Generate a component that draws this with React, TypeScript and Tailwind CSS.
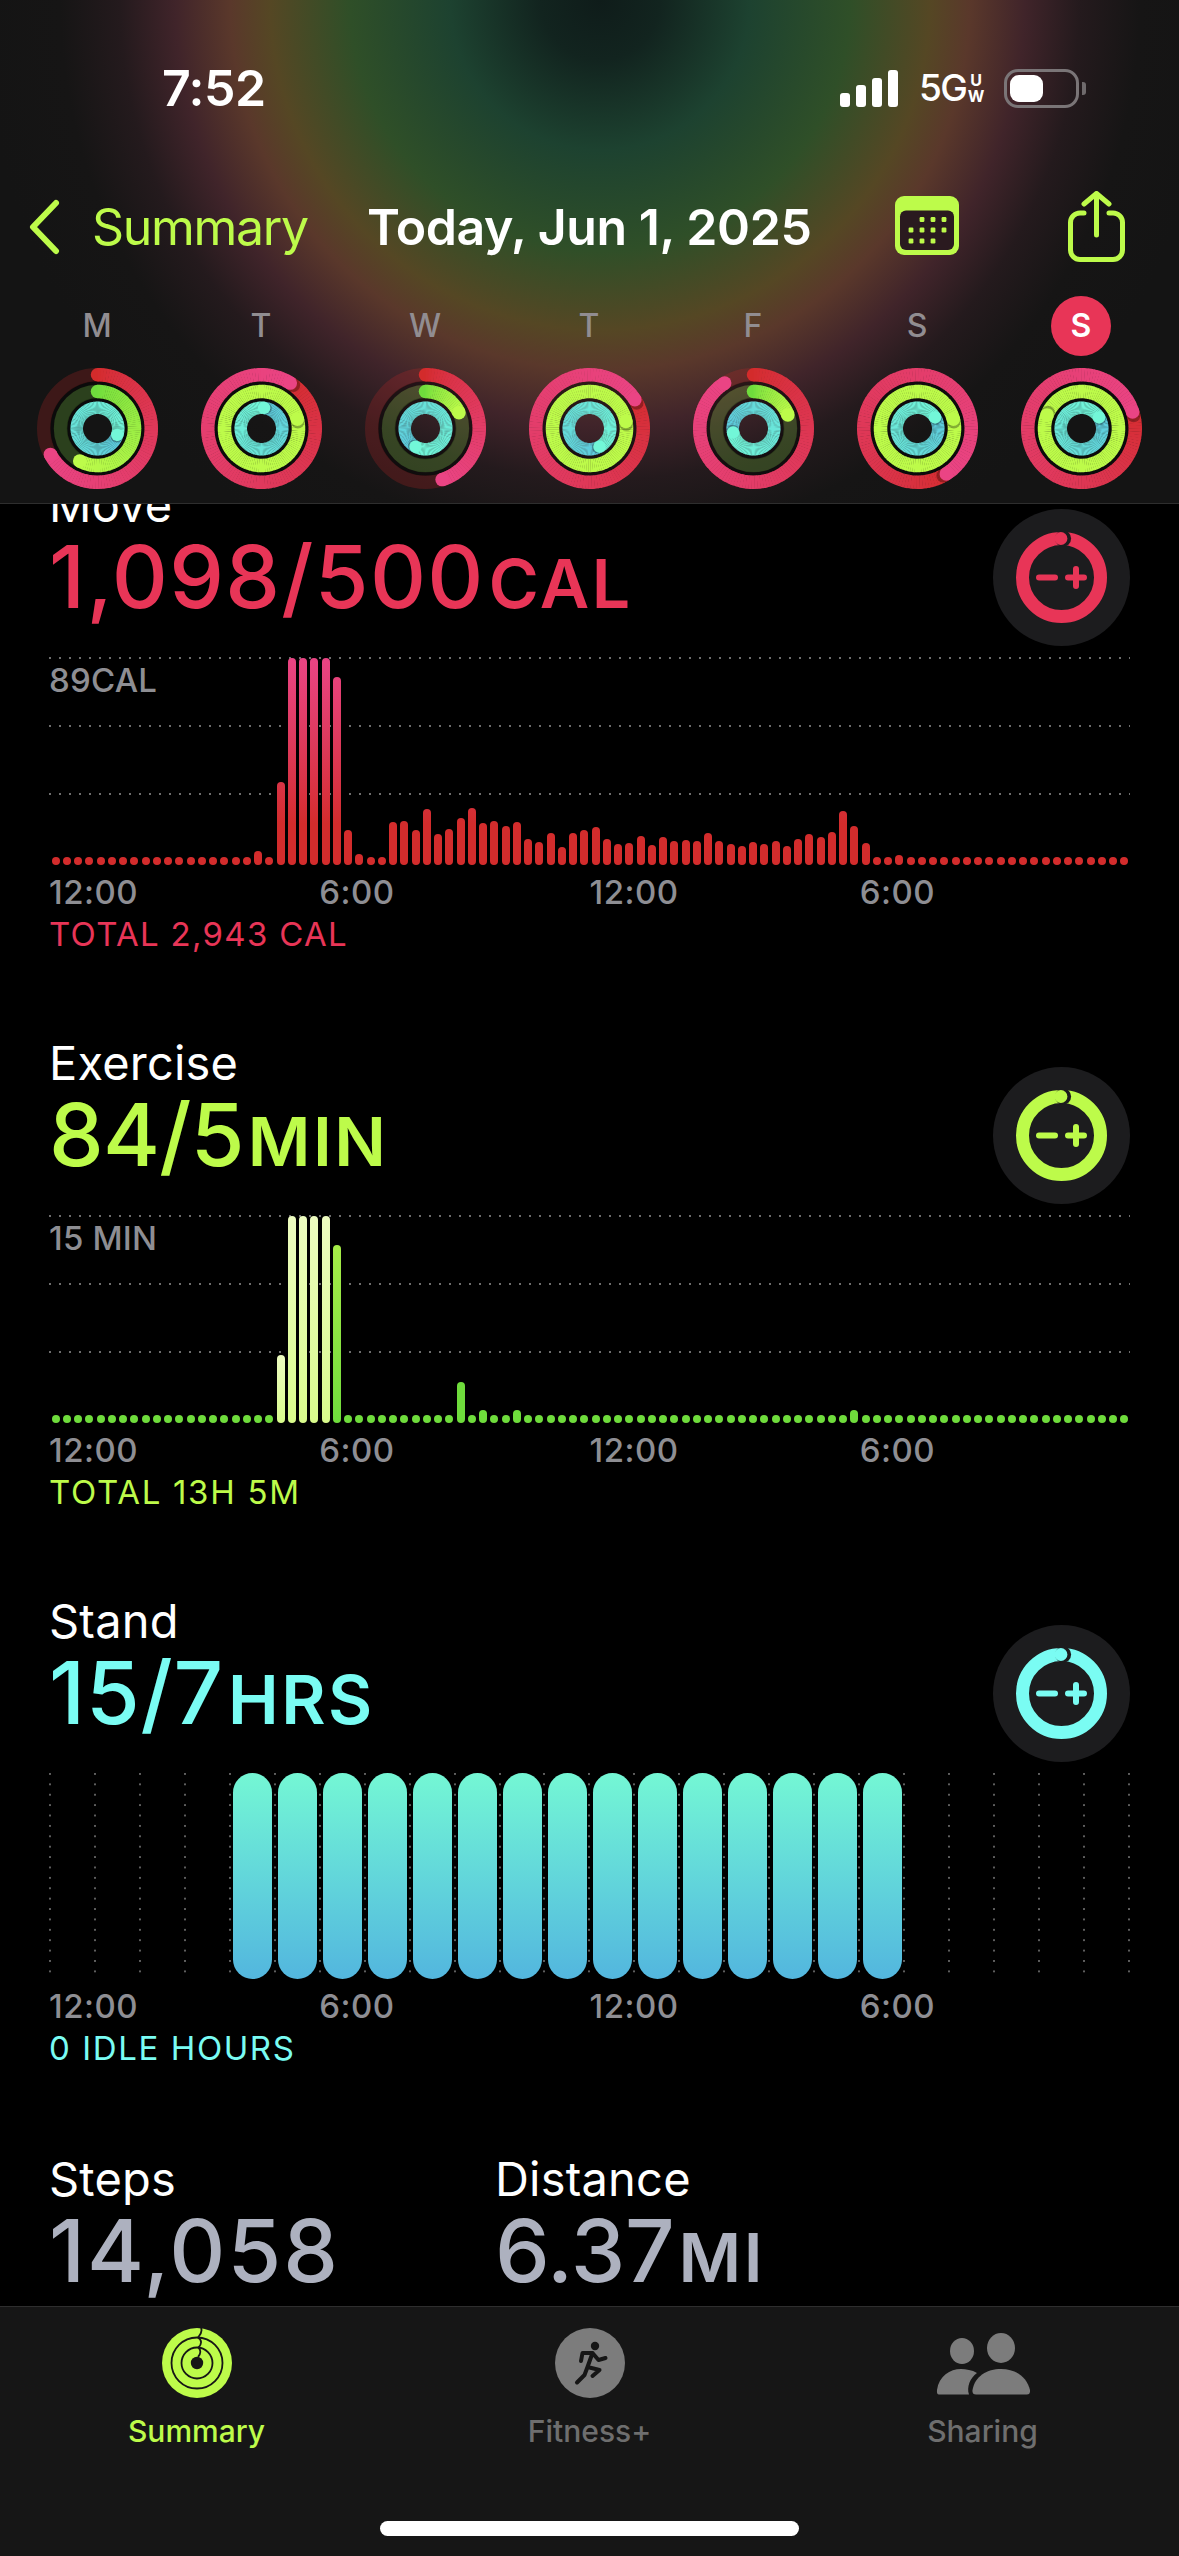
const FONT = "font-['Inter','Noto_Sans',sans-serif]";

type Rgb = [number, number, number];
type Tone = { from: Rgb; to: Rgb; over: Rgb; track: string };

const MOVE: Tone = { from: [211, 43, 43], to: [234, 68, 132], over: [211, 43, 43], track: "#d32b2b" };
const EXERCISE: Tone = { from: [111, 220, 60], to: [189, 251, 74], over: [189, 251, 74], track: "#7ee03f" };
const STAND: Tone = { from: [84, 182, 222], to: [114, 247, 216], over: [90, 196, 222], track: "#54b6de" };

const days = [
  { label: "M", move: 0.67, exercise: 0.58, stand: 1.3 },
  { label: "T", move: 1.09, exercise: 1.21, stand: 1.02 },
  { label: "W", move: 0.45, exercise: 0.18, stand: 1.58 },
  { label: "T", move: 1.16, exercise: 1.22, stand: 1.42 },
  { label: "F", move: 0.91, exercise: 0.19, stand: 1.72 },
  { label: "S", move: 1.41, exercise: 1.21, stand: 1.16 },
  { label: "S", move: 1.2, exercise: 1.81, stand: 1.16, today: true },
];

function polar(r: number, deg: number, c = 60.5) {
  const a = ((deg - 90) * Math.PI) / 180;
  return [c + r * Math.cos(a), c + r * Math.sin(a)];
}

function RingArc({ r, width, progress, tone }: { r: number; width: number; progress: number; tone: Tone }) {
  const over = progress >= 1;
  const end = progress * 360;
  const start = over ? end - 360 : 0;
  const n = Math.ceil((end - start) / 3);
  const base = over ? tone.over : tone.from;
  const colorAt = (t: number) =>
    `rgb(${base.map((v, i) => Math.round(v + (tone.to[i] - v) * Math.pow(t, 0.65))).join(",")})`;
  const [sx, sy] = polar(r, start);
  const [hx, hy] = polar(r, end);
  const [dx, dy] = polar(r, end + 4);
  return (
    <g>
      {!over && <circle cx={60.5} cy={60.5} r={r} fill="none" stroke={tone.track} strokeOpacity={0.22} strokeWidth={width} />}
      {!over && <circle cx={sx} cy={sy} r={width / 2} fill={colorAt(0)} />}
      {Array.from({ length: n }).map((_, i) => {
        const a0 = start + ((end - start) * i) / n;
        const a1 = start + ((end - start) * (i + 1)) / n + 0.4;
        const [x0, y0] = polar(r, a0);
        const [x1, y1] = polar(r, a1);
        return (
          <path
            key={i}
            d={`M${x0} ${y0}A${r} ${r} 0 0 1 ${x1} ${y1}`}
            fill="none"
            stroke={colorAt((i + 0.5) / n)}
            strokeWidth={width}
          />
        );
      })}
      {over && <circle cx={dx} cy={dy} r={width / 2} fill="#000" fillOpacity={0.3} />}
      <circle cx={hx} cy={hy} r={width / 2} fill={colorAt(1)} />
    </g>
  );
}

function Rings({ move, exercise, stand }: { move: number; exercise: number; stand: number }) {
  return (
    <svg width="121" height="121" viewBox="0 0 121 121">
      <circle cx={60.5} cy={60.5} r={45.5} fill="none" stroke="#000" strokeOpacity={0.45} strokeWidth={4} />
      <circle cx={60.5} cy={60.5} r={29} fill="none" stroke="#000" strokeOpacity={0.45} strokeWidth={4} />
      <RingArc r={53.75} width={13.5} progress={move} tone={MOVE} />
      <RingArc r={37} width={13.5} progress={exercise} tone={EXERCISE} />
      <RingArc r={20.75} width={12.5} progress={stand} tone={STAND} />
    </svg>
  );
}

function StatusBar() {
  return (
    <div className="flex items-center h-[60px] mt-[58px] pl-[162px] pr-[100px]">
      <span className="text-[50px] leading-[60px] font-semibold text-white tracking-[-0.5px]">7:52</span>
      <div className="ml-auto flex items-center">
        <svg width="58" height="37" viewBox="0 0 58 37" fill="#fff">
          <rect x="0" y="23" width="10" height="14" rx="3" />
          <rect x="16" y="15" width="10" height="22" rx="3" />
          <rect x="32" y="8" width="10" height="29" rx="3" />
          <rect x="48" y="0" width="10" height="37" rx="3" />
        </svg>
        <span className="ml-[21px] w-[46px] text-[37px] leading-[44px] font-medium text-white tracking-[-1.5px]">5G</span>
        <div className="ml-[3px] w-[16px] flex flex-col items-center text-white font-bold text-[16px] leading-[16px]">
          <span>U</span>
          <span>W</span>
        </div>
        <div className="relative ml-[20px] flex items-center w-[75px] h-[39px] rounded-[14px] border-[3px] border-[#7a7577] p-[3px]">
          <div className="w-[33px] h-[27px] rounded-[9px] bg-white" />
          <div className="absolute -right-[10px] top-[10px] w-[4px] h-[13px] rounded-r-[3px] bg-[#6f6a6c]" />
        </div>
      </div>
    </div>
  );
}

function NavBar() {
  return (
    <div className="flex items-center h-[70px] mt-[74px]">
      <svg className="ml-[29px]" width="31" height="56" viewBox="0 0 31 56" fill="none" stroke="#bdfb4a" strokeWidth="6" strokeLinecap="round" strokeLinejoin="round">
        <path d="M27 4 L4 28 L27 52" />
      </svg>
      <span className="ml-[32px] text-[50px] leading-[60px] text-[#bdfb4a] tracking-[-1.3px]">Summary</span>
      <span className="ml-[59px] text-[50px] leading-[60px] font-semibold text-white tracking-[-0.4px]">Today, Jun 1, 2025</span>
      <svg className="ml-[84px] mt-[-3px]" width="64" height="59" viewBox="0 0 64 59">
        <rect width="64" height="59" rx="9" fill="#bdfb4a" />
        <rect x="5" y="14.5" width="54" height="39.5" rx="6" fill="#2a1a1f" />
        {[[27, 23.5], [38, 23.5], [49, 23.5], [16, 34], [27, 34], [38, 34], [49, 34], [16, 45], [27, 45], [38, 45]].map(([x, y]) => (
          <rect key={`${x}-${y}`} x={x - 2.4} y={y - 2.4} width="4.8" height="4.8" rx="1.2" fill="#bdfb4a" />
        ))}
      </svg>
      <svg className="ml-[109px] mt-[-1px]" width="57" height="71" viewBox="0 0 57 71" fill="none" stroke="#bdfb4a" strokeWidth="5" strokeLinecap="round" strokeLinejoin="round">
        <path d="M16 22 H12 A9.5 9.5 0 0 0 2.5 31.5 V59 A9.5 9.5 0 0 0 12 68.5 H45 A9.5 9.5 0 0 0 54.5 59 V31.5 A9.5 9.5 0 0 0 45 22 H41" />
        <path d="M28.5 44 V3" />
        <path d="M16 13 L28.5 2.5 L41 13" />
      </svg>
    </div>
  );
}

function WeekRow() {
  return (
    <div className="flex mt-[34px] pl-[15px]">
      {days.map((d, i) => (
        <div key={i} className="w-[164px] flex flex-col items-center">
          <div
            className={`w-[60px] h-[60px] rounded-full flex items-center justify-center text-[32px] font-medium ${
              d.today ? "bg-[#e83557] text-white font-semibold" : "text-[#918d91]"
            }`}
          >
            {d.label}
          </div>
          <div className="mt-[12px] h-[121px]">
            <Rings move={d.move} exercise={d.exercise} stand={d.stand} />
          </div>
        </div>
      ))}
    </div>
  );
}

function ButtonRing({ color }: { color: string }) {
  const r = 39;
  const c = 45.5;
  return (
    <div className="w-[137px] h-[137px] rounded-full bg-[#1c1c1e] flex items-center justify-center shrink-0">
      <svg width="91" height="91" viewBox="0 0 91 91">
        <circle cx={c} cy={c} r={r} fill="none" stroke={color} strokeWidth={13} />
        <circle cx={c + 1.6} cy={c - r} r={8} fill="#1c1c1e" />
        <circle cx={c - 0.6} cy={c - r} r={6.5} fill={color} />
        <path d="M23 45.5 H39" stroke={color} strokeWidth={6} strokeLinecap="round" />
        <path d="M52 45.5 H68 M60 37 V54" stroke={color} strokeWidth={6} strokeLinecap="round" />
      </svg>
    </div>
  );
}

function Value(props: { value: string; unit?: string; color: string; tracking: string }) {
  return (
    <div className={`mt-[4px] flex items-baseline h-[80px] leading-[80px] ${props.color}`}>
      <span className={`text-[87px] font-medium ${props.tracking}`}>{props.value}</span>
      {props.unit && <span className="ml-[4px] text-[68px] font-semibold tracking-[2.5px]">{props.unit}</span>}
    </div>
  );
}

function SectionHeader(props: { title: string; value: string; unit: string; color: string; ring: string; tracking: string }) {
  return (
    <div className="flex justify-between h-[169px]">
      <div>
        <div className="text-[47px] leading-[56px] text-white tracking-[0.2px]">{props.title}</div>
        <Value value={props.value} unit={props.unit} color={props.color} tracking={props.tracking} />
      </div>
      <div className="mt-[32px]">
        <ButtonRing color={props.ring} />
      </div>
    </div>
  );
}

function TimeAxis() {
  return (
    <div className="grid grid-cols-4 mt-[9px] text-[33px] leading-[36px] font-medium text-[#8e8e93] tracking-[0.5px]">
      <span>12:00</span>
      <span>6:00</span>
      <span>12:00</span>
      <span>6:00</span>
    </div>
  );
}

const dotted = "h-[2px] bg-[linear-gradient(to_right,#6e6e6e_2px,transparent_2px)] bg-[length:10px_2px]";

function BarChart({ label, bars }: { label: string; bars: { h: number; className: string }[] }) {
  return (
    <div className="relative h-[208px] mt-[11px]">
      <div className="absolute inset-x-0 top-0 flex flex-col gap-[66px]">
        <div className={dotted} />
        <div className={dotted} />
        <div className={dotted} />
      </div>
      <span className="absolute left-0 top-[5px] text-[33px] leading-[36px] font-medium text-[#8e8e93] tracking-[0.2px]">{label}</span>
      <div className="relative flex items-end gap-[3.25px] h-full pl-[2.6px]">
        {bars.map((b, i) => (
          <div key={i} className={`w-[8px] rounded-full shrink-0 ${b.className}`} style={{ height: b.h }} />
        ))}
      </div>
    </div>
  );
}

const moveHeights: Record<number, number> = {
  18: 14, 20: 83, 21: 207, 22: 207, 23: 207, 24: 207, 25: 188, 26: 35, 27: 11,
  30: 43, 31: 44, 32: 35, 33: 56, 34: 31, 35: 36, 36: 47, 37: 57, 38: 42, 39: 44, 40: 39, 41: 43,
  42: 26, 43: 23, 44: 32, 45: 18, 46: 32, 47: 35, 48: 38, 49: 26, 50: 21, 51: 22, 52: 29, 53: 20,
  54: 28, 55: 24, 56: 25, 57: 24, 58: 32, 59: 24, 60: 21, 61: 19, 62: 23, 63: 21, 64: 24, 65: 19,
  66: 26, 67: 31, 68: 28, 69: 33, 70: 54, 71: 39, 72: 22, 75: 10,
};
const exerciseHeights: Record<number, number> = {
  20: 68, 21: 207, 22: 207, 23: 207, 24: 207, 25: 178, 36: 41, 38: 13, 41: 13, 71: 13,
};

const moveBars = Array.from({ length: 96 }).map((_, i) => ({
  h: moveHeights[i] ?? 8,
  className: "bg-linear-to-t from-[#d32c2c] from-[20%] to-[#ea4484] bg-bottom bg-no-repeat bg-[length:8px_207px]",
}));

const exerciseBars = Array.from({ length: 96 }).map((_, i) => ({
  h: exerciseHeights[i] ?? 8,
  className:
    i >= 20 && i <= 24
      ? "bg-linear-to-t from-[#d9fb8c] to-[#edfcc0]"
      : i === 25
        ? "bg-linear-to-t from-[#6fdc3c] to-[#a6ec48]"
        : "bg-[#6fdc3c]",
}));

function StandChart() {
  return (
    <div className="relative h-[206px] mt-[11px]">
      <div className="absolute inset-0 flex justify-between">
        {Array.from({ length: 25 }).map((_, i) => (
          <div key={i} className="w-[2px] h-full bg-[linear-gradient(to_bottom,#5e5e5e_2px,transparent_2px)] bg-[length:2px_10.4px]" />
        ))}
      </div>
      <div className="relative flex gap-[6px] h-full pl-[184px]">
        {Array.from({ length: 15 }).map((_, i) => (
          <div key={i} className="w-[39px] h-full rounded-full bg-linear-to-b from-[#74f7d4] to-[#53b6de]" />
        ))}
      </div>
    </div>
  );
}

function TabBar() {
  return (
    <div className="h-[250px] shrink-0 border-t border-[#2e2e2e] bg-[#161616] flex flex-col items-center">
      <div className="grid grid-cols-3 w-full mt-[21px] text-[30px] leading-[36px] font-medium text-center text-[#6e6e6e]">
        <div className="flex flex-col items-center">
          <svg width="70" height="70" viewBox="0 0 70 70">
            <circle cx="35" cy="35" r="35" fill="#bdfb4a" />
            <circle cx="35" cy="35" r="25.5" fill="none" stroke="#161616" strokeWidth="1.8" />
            <circle cx="35" cy="35" r="15.5" fill="none" stroke="#161616" strokeWidth="1.8" />
            <circle cx="35" cy="35" r="6.2" fill="#161616" />
            <path d="M39 0 C41 4 38 7 36 9.5 C40 12 40 16 36.5 19.5 C39 22 39 26 36 29" fill="none" stroke="#161616" strokeWidth="1.8" />
          </svg>
          <span className="mt-[15px] text-[#bdfb4a]">Summary</span>
        </div>
        <div className="flex flex-col items-center">
          <svg width="70" height="70" viewBox="0 0 70 70">
            <circle cx="35" cy="35" r="35" fill="#7c7c7c" />
            <circle cx="40" cy="18" r="4.2" fill="#161616" />
            <path
              d="M37.5 25 L32.5 39 L29.5 47 L22 54.5 M32.5 39 L44.5 42 L37.5 48 M37.5 25 H27.5 L26 33 M37.5 25 L43.5 32 L50.5 30"
              fill="none"
              stroke="#161616"
              strokeWidth="4"
              strokeLinecap="round"
              strokeLinejoin="round"
            />
          </svg>
          <span className="mt-[15px]">Fitness+</span>
        </div>
        <div className="flex flex-col items-center">
          <svg width="94" height="70" viewBox="9 12 94 70" fill="#7c7c7c">
            <ellipse cx="35" cy="35" rx="12" ry="13" />
            <ellipse cx="74" cy="32" rx="14" ry="15" />
            <path d="M49 78.5 Q45 78.5 45.5 74 C48 60 60 53 74 53 C90 53 100 62 103 74 Q103.5 78.5 100 78.5 Z" />
            <path d="M42 78.5 H12 Q9.5 78.5 10 74 C12 60 23 53 34 53 C39 53 45 54 50 57 C43 62 39.5 71 42 78.5 Z" />
          </svg>
          <span className="mt-[15px]">Sharing</span>
        </div>
      </div>
      <div className="mt-[72px] w-[419px] h-[15px] rounded-full bg-white" />
    </div>
  );
}

export default function App() {
  return (
    <div className={`${FONT} w-[1179px] h-[2556px] bg-black flex flex-col overflow-hidden`}>
      <header className="relative z-10 h-[504px] shrink-0 border-b border-[#2e2e2e] bg-[radial-gradient(circle_at_600px_0px,#0f1c1a_0px,#12241f_60px,#1d4230_150px,#2f4f28_250px,#554724_330px,#5a382b_370px,#40242a_425px,#241a1d_480px,#161515_540px,#141414_620px)]">
        <div className="h-0" />
        <StatusBar />
        <NavBar />
        <WeekRow />
      </header>

      <main className="flex-1 min-h-0 overflow-hidden px-[49px]">
        <div className="-mt-[27px]">
          <section className="h-[558px]">
            <SectionHeader title="Move" value="1,098/500" unit="CAL" color="text-[#e83557]" ring="#e83557" tracking="tracking-[1.3px]" />
            <BarChart label="89CAL" bars={moveBars} />
            <TimeAxis />
            <div className="mt-[6px] text-[33px] leading-[36px] tracking-[1.3px] text-[#e83557]">TOTAL 2,943 CAL</div>
          </section>
          <section className="h-[558px]">
            <SectionHeader title="Exercise" value="84/5" unit="MIN" color="text-[#bdfb4a]" ring="#bdfb4a" tracking="tracking-[-0.75px]" />
            <BarChart label="15 MIN" bars={exerciseBars} />
            <TimeAxis />
            <div className="mt-[6px] text-[33px] leading-[36px] tracking-[1.7px] text-[#bdfb4a]">TOTAL 13H 5M</div>
          </section>
          <section className="h-[558px]">
            <SectionHeader title="Stand" value="15/7" unit="HRS" color="text-[#7afcf3]" ring="#7afcf3" tracking="tracking-[0.8px]" />
            <StandChart />
            <div className="mt-[2px]">
              <TimeAxis />
            </div>
            <div className="mt-[6px] text-[33px] leading-[36px] tracking-[1.6px] text-[#7afcf3]">0 IDLE HOURS</div>
          </section>
          <section className="grid grid-cols-[446px_1fr]">
            <div>
              <div className="text-[47px] leading-[56px] text-white tracking-[0.2px]">Steps</div>
              <Value value="14,058" color="text-[#adb1bf]" tracking="tracking-[2px]" />
            </div>
            <div>
              <div className="text-[47px] leading-[56px] text-white tracking-[0.2px]">Distance</div>
              <Value value="6.37" unit="MI" color="text-[#adb1bf]" tracking="tracking-[-0.25px]" />
            </div>
          </section>
        </div>
      </main>

      <TabBar />
    </div>
  );
}
